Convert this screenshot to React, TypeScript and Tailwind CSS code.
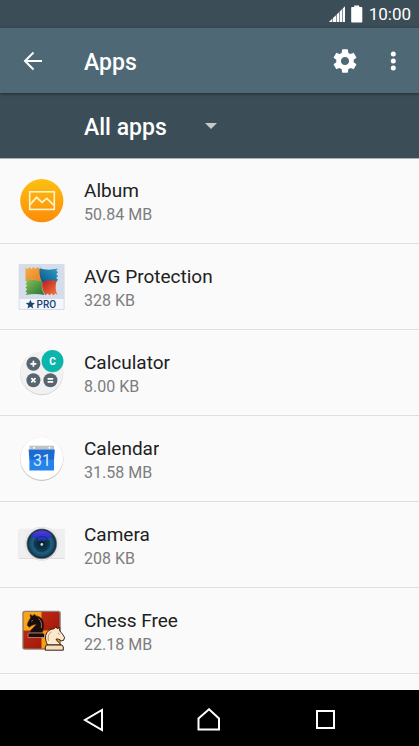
import React from 'react';

interface AppEntry {
  id: string;
  name: string;
  size: string;
  icon: React.ReactNode;
}

const ICON_CLASS = 'w-12 h-12 shrink-0';

function AlbumIcon() {
  return (
    <svg className={ICON_CLASS} viewBox="0 0 48 48" aria-hidden="true">
      <defs>
        <linearGradient id="album-bg" x1="0" y1="0" x2="0" y2="1">
          <stop offset="0" stopColor="#fdc010" />
          <stop offset="1" stopColor="#fb8c08" />
        </linearGradient>
      </defs>
      <circle cx="23.8" cy="23.7" r="21.6" fill="url(#album-bg)" />
      <rect x="11.7" y="14.8" width="24.6" height="17.6" fill="none" stroke="#fff3cf" strokeWidth="1.6" />
      <path d="M12 27.6 18.6 20.3 24 25.4 28.8 21.4 36 28.4" fill="none" stroke="#fff3cf" strokeWidth="1.8" />
    </svg>
  );
}

function AvgIcon() {
  return (
    <svg className={ICON_CLASS} viewBox="0 0 48 48" aria-hidden="true">
      <defs>
        <linearGradient id="avg-orange" x1="0" y1="0" x2="1" y2="1">
          <stop offset="0" stopColor="#f3b04c" />
          <stop offset="1" stopColor="#ea7a1c" />
        </linearGradient>
        <linearGradient id="avg-blue" x1="0" y1="1" x2="1" y2="0">
          <stop offset="0" stopColor="#0a4f86" />
          <stop offset="1" stopColor="#2f9fc2" />
        </linearGradient>
        <linearGradient id="avg-green" x1="0" y1="0" x2="1" y2="1">
          <stop offset="0" stopColor="#8cbf55" />
          <stop offset="1" stopColor="#1f7436" />
        </linearGradient>
        <linearGradient id="avg-red" x1="0" y1="0" x2="1" y2="1">
          <stop offset="0" stopColor="#c0181c" />
          <stop offset="1" stopColor="#f08040" />
        </linearGradient>
      </defs>
      <rect x="0.6" y="1" width="46" height="46" rx="1.5" fill="#d5dcea" />
      <path d="M1.6 36h44v8.500a1.500 1.500 0 0 1-1.500 1.500h-41a1.500 1.500 0 0 1-1.500-1.500z" fill="#f4f8fd" />
      <path d="M7.500 18V4.500l2 1.600 2-2 2 2 2-2 2 2 2-2 2 2 2-2c-.5 3 .5 6 1.500 9 .8 3 .8 5-.5 6-5-2.500-11-3.500-17-1.100z" fill="url(#avg-orange)" />
      <path d="M21.500 5.500c6 1.500 12 1.500 18.500 0l-1.800 2 1.800 1.800-1.800 1.900 1.800 1.800-1.800 1.900 1.800 1.800-1.800 2.300c-5-1.500-9.500-1-13.700 1.500-2.500-5-3.500-10-3-15z" fill="url(#avg-blue)" />
      <path d="M7.500 17.500c6-1.500 12-1 17 1.500-1.500 4.500-.5 8.500 2 13-6-1.500-12.500-1.500-19 0l1.700-2-1.700-1.800 1.700-1.900-1.700-1.800 1.700-1.900-1.700-1.800 1.700-1.700z" fill="url(#avg-green)" />
      <path d="M24.500 19.500c4.500-2.500 9-3 14-1-1.500 4.500-1 9 1 13.500l-2-1.400-2 1.700-2-1.700-2 1.700-2-1.700-2 1.700c-3-4-4-8.500-3-12.800z" fill="url(#avg-red)" />
      <path d="M12.400 36.700l1.300 3 3.300.3-2.500 2.200.8 3.200-2.900-1.700-2.900 1.700.8-3.200-2.500-2.200 3.300-.3z" fill="#1d4274" />
      <text x="18.600" y="45" fontSize="10" fontWeight="500" fill="#1d4274">PRO</text>
    </svg>
  );
}

function CalculatorIcon() {
  return (
    <svg className={ICON_CLASS} viewBox="0 0 48 48" aria-hidden="true">
      <circle cx="23.700" cy="24.600" r="21.600" fill="#cfcfcf" />
      <circle cx="23.700" cy="23.800" r="21.500" fill="#f1f1f1" />
      <g fill="#56656f">
        <circle cx="15.400" cy="14.800" r="7" />
        <circle cx="15.400" cy="31.300" r="7" />
        <circle cx="32.400" cy="31.300" r="7" />
      </g>
      <circle cx="34.500" cy="12.500" r="10.900" fill="#009688" opacity="0.35" />
      <circle cx="34.500" cy="12" r="10.900" fill="#0ab5ac" />
      <g stroke="#fff" strokeWidth="1.700" fill="none">
        <path d="M12.400 14.800h6M15.400 11.800v6" />
        <path d="M13.300 29.200l4.200 4.200M17.500 29.200l-4.200 4.200" />
        <path d="M29.600 29.900h5.600M29.600 32.800h5.600" />
      </g>
      <text x="34.500" y="15.500" fontSize="10" fontWeight="700" textAnchor="middle" fill="#fff">C</text>
    </svg>
  );
}

function CalendarIcon() {
  return (
    <svg className={ICON_CLASS} viewBox="0 0 48 48" aria-hidden="true">
      <circle cx="23.700" cy="24.200" r="21.700" fill="#c4c4c4" />
      <circle cx="23.700" cy="23.400" r="21.600" fill="#e8e8e8" />
      <circle cx="23.700" cy="23.300" r="21.200" fill="#fff" />
      <path d="M11.500 10.700h24.500v4h-24.500z" fill="#bdc3c7" />
      <circle cx="16" cy="12.700" r="1" fill="#fff" />
      <circle cx="31.500" cy="12.700" r="1" fill="#fff" />
      <path d="M10.600 14.400h26.200l-.8 10.600h-24.600z" fill="#1c6bd2" />
      <path d="M11.400 24.500h24.600v11h-24.600z" fill="#2583ec" />
      <text x="23.900" y="30.700" fontSize="16" textAnchor="middle" fill="#dbeafc">31</text>
    </svg>
  );
}

function CameraIcon() {
  return (
    <svg className={ICON_CLASS} viewBox="0 0 48 48" aria-hidden="true">
      <defs>
        <radialGradient id="camera-lens">
          <stop offset="0" stopColor="#3c9bb8" />
          <stop offset="0.3" stopColor="#0b2636" />
          <stop offset="0.65" stopColor="#1d5f80" />
          <stop offset="0.85" stopColor="#174a68" />
          <stop offset="1" stopColor="#14202b" />
        </radialGradient>
        <linearGradient id="camera-glare" x1="0" y1="0" x2="0" y2="1">
          <stop offset="0" stopColor="#5a36d8" />
          <stop offset="0.6" stopColor="#2534c8" />
          <stop offset="1" stopColor="#123a80" />
        </linearGradient>
      </defs>
      <rect x="0.500" y="8.500" width="46.500" height="29.500" rx="1.500" fill="#d9d9d9" />
      <rect x="0.500" y="7.700" width="46.500" height="29.500" rx="1.500" fill="#efeff0" />
      <circle cx="23.800" cy="22.800" r="17" fill="#dedfe1" />
      <circle cx="23.800" cy="22.800" r="16.200" fill="#f6f6f6" />
      <circle cx="23.800" cy="22.800" r="15.400" fill="#7d868e" />
      <circle cx="23.800" cy="22.800" r="14.500" fill="url(#camera-lens)" />
      <path d="M13 14.800a13.500 13.500 0 0 1 21.600 0L23.800 21.500z" fill="url(#camera-glare)" />
      <circle cx="23.800" cy="22.800" r="7.500" fill="none" stroke="#081a2b" strokeOpacity="0.4" strokeWidth="1" />
      <circle cx="23.800" cy="22.800" r="3.200" fill="#0a2030" />
      <circle cx="23.800" cy="23.500" r="1.400" fill="#a6e4ee" />
    </svg>
  );
}

function ChessIcon() {
  return (
    <svg className={ICON_CLASS} viewBox="0 0 48 48" aria-hidden="true">
      <defs>
        <linearGradient id="chess-red" x1="0" y1="0" x2="1" y2="1">
          <stop offset="0" stopColor="#c8321a" />
          <stop offset="1" stopColor="#961004" />
        </linearGradient>
      </defs>
      <rect x="4.300" y="3.700" width="38.500" height="39" rx="2.500" fill="#8f8179" />
      <rect x="5.500" y="5" width="36" height="36.500" rx="1.500" fill="url(#chess-red)" />
      <path d="M7 5h16.500v18.500h-18v-17a1.500 1.500 0 0 1 1.500-1.500z" fill="#f7a51b" />
      <path d="M23.500 23.500h18v16.500a1.500 1.500 0 0 1-1.500 1.500h-16.500z" fill="#f4a010" />
      {/* black knight */}
      <path d="M12 25.500c.5-3.500 4.500-5 6.500-8.500-2 .8-4 .8-5.500 2l-1.800 1.200-1.900-2c.2-3 2-4.500 3.200-7.200l-.4-3.500 2.700 1.400 1.600-1.700 1.700 1.700c5.500.5 8.500 5.500 7.500 11.500l-1.100 5.100z" fill="#1b0d0a" stroke="#4b1c10" strokeWidth="0.600" />
      <path d="M11 26h14.500l1 1.600v2.900h-16.500v-2.900z" fill="#1b0d0a" stroke="#e2bd9e" strokeWidth="0.600" />
      <path d="M13.300 14.300l1.600-.9M20.500 11.500c2.500 2 3.500 5 2.800 9.500" stroke="#c7a489" strokeWidth="0.700" fill="none" />
      {/* white knight */}
      <path d="M29.500 38c-1.500-3.500-2.500-6-1.800-9.500.8-3.800 4-6.500 8.300-6.800l2-1.900 1.200 1.900 2.600-1.200-.2 3.200c2.200 2.600 3.800 4.300 5 7l-1.200 2.800-2.200.3c-1.700-1.600-3.400-2-5.200-1.700.6 2.500 4 3.300 4.500 5.900z" fill="#fbe9cd" stroke="#3b1b0c" strokeWidth="1" />
      <path d="M28.500 38h15.500l1.300 2v3.200h-18v-3.200z" fill="#f5dfc0" stroke="#3b1b0c" strokeWidth="1" />
      <path d="M39.800 26.300l1.700.9M33.500 24.800c-3 2-4 5-3 9" stroke="#a8784e" strokeWidth="0.800" fill="none" />
    </svg>
  );
}

const APPS: AppEntry[] = [
  { id: 'album', name: 'Album', size: '50.84 MB', icon: <AlbumIcon /> },
  { id: 'avg', name: 'AVG Protection', size: '328 KB', icon: <AvgIcon /> },
  { id: 'calculator', name: 'Calculator', size: '8.00 KB', icon: <CalculatorIcon /> },
  { id: 'calendar', name: 'Calendar', size: '31.58 MB', icon: <CalendarIcon /> },
  { id: 'camera', name: 'Camera', size: '208 KB', icon: <CameraIcon /> },
  { id: 'chess', name: 'Chess Free', size: '22.18 MB', icon: <ChessIcon /> },
];

function StatusBar() {
  return (
    <div className="h-7 flex items-center justify-end gap-1.5 pr-2 bg-[#3b4d57] text-white">
      <svg className="w-4 h-4" viewBox="0 0 16 16" aria-label="Signal strength">
        <path d="M0 16L3 13V16zM4 12L7 9.500V16H4zM8 8.500L10 6.500V16H8zM11 5.500L13 3.500V16H11zM14 2.500L16 .5V16H14z" fill="#fff" />
        <path d="M0 16L16 0V16z" fill="#fff" opacity="0.4" />
      </svg>
      <svg className="w-3 h-[18px]" viewBox="0 0 12 18" aria-label="Battery full">
        <path d="M3.200 .5h5v1.500h2.300a.8.800 0 0 1 .8.800v14a.7.700 0 0 1-.7.700H.9a.7.700 0 0 1-.7-.7V2.800a.8.800 0 0 1 .8-.8h2.200z" fill="#fff" />
      </svg>
      <span className="text-[17px] leading-7">10:00</span>
    </div>
  );
}

function Toolbar() {
  return (
    <header className="relative z-10 h-[65px] flex items-center pl-5 pr-3 bg-[#4e6875] text-white shadow-[0_1px_3px_rgba(0,0,0,0.45)]">
      <button type="button" aria-label="Back" className="w-6 h-6">
        <svg className="w-6 h-6" viewBox="0 0 24 24" fill="none" stroke="currentColor" strokeWidth="2">
          <path d="M22 12H5M13.500 3.500L5 12L13.500 20.500" />
        </svg>
      </button>
      <h1 className="flex-1 pl-10 pt-1 text-[23px] leading-8 font-medium">Apps</h1>
      <button type="button" aria-label="Settings" className="w-7 h-7 mr-5">
        <svg className="w-7 h-7" viewBox="0 0 24 24" fill="currentColor">
          <path d="M19.430 12.980c.04-.32.070-.64.070-.98s-.03-.66-.07-.98l2.110-1.650c.19-.15.240-.42.120-.64l-2-3.460c-.12-.22-.39-.3-.61-.22l-2.490 1c-.52-.4-1.080-.73-1.690-.98l-.38-2.650C14.460 2.180 14.250 2 14 2h-4c-.25 0-.46.180-.49.420l-.38 2.650c-.61.250-1.170.590-1.690.98l-2.490-1c-.23-.09-.49 0-.61.220l-2 3.460c-.13.220-.07.490.120.640l2.110 1.650c-.04.320-.07.650-.07.980s.03.660.070.980l-2.110 1.650c-.19.150-.24.420-.12.640l2 3.460c.12.220.390.300.610.220l2.490-1c.52.400 1.080.730 1.690.980l.38 2.650c.03.240.240.420.490.420h4c.25 0 .46-.18.490-.42l.38-2.650c.61-.25 1.170-.59 1.690-.98l2.490 1c.23.090.490 0 .61-.22l2-3.460c.12-.22.070-.49-.12-.64l-2.110-1.650zM12 15.500c-1.930 0-3.500-1.570-3.500-3.500s1.570-3.500 3.500-3.500 3.500 1.570 3.500 3.500-1.570 3.500-3.500 3.500z" />
        </svg>
      </button>
      <button type="button" aria-label="More options" className="w-7 h-7">
        <svg className="w-7 h-7" viewBox="0 0 28 28" fill="currentColor">
          <circle cx="14.300" cy="7" r="2.500" />
          <circle cx="14.300" cy="14" r="2.500" />
          <circle cx="14.300" cy="21" r="2.500" />
        </svg>
      </button>
    </header>
  );
}

function FilterBar() {
  return (
    <div className="h-[65px] flex items-center pl-[84px] bg-[#3b4d57] text-white shadow-[0_1px_0_#a9b4b9]">
      <div className="grid items-center w-[133px]">
        <select
          aria-label="Filter apps"
          defaultValue="all"
          className="col-start-1 row-start-1 w-full pt-1 appearance-none bg-transparent text-[23px] leading-8 font-medium outline-none"
        >
          <option value="all">All apps</option>
        </select>
        <svg className="col-start-1 row-start-1 justify-self-end w-3 h-1.5 pointer-events-none" viewBox="0 0 12 6">
          <path d="M0 0h12L6 6z" fill="#c4cace" />
        </svg>
      </div>
    </div>
  );
}

function AppRow({ app }: { app: AppEntry }) {
  return (
    <li className="h-[86px] border-b border-[#dedede]">
      <button type="button" className="w-full h-full flex items-center gap-[18px] pl-[18px] pr-4 text-left">
        {app.icon}
        <div className="min-w-0 pt-1">
          <div className="text-[19px] leading-6 text-[#212121] truncate">{app.name}</div>
          <div className="text-base leading-6 text-[#7d7d7d] truncate">{app.size}</div>
        </div>
      </button>
    </li>
  );
}

function NavBar() {
  return (
    <nav className="h-14 grid grid-cols-3 items-center justify-items-center px-9 pt-1 bg-black text-white">
      <button type="button" aria-label="Back" className="w-6 h-6">
        <svg className="w-6 h-6" viewBox="0 0 24 24" fill="none" stroke="currentColor" strokeWidth="2">
          <path d="M20 2v20L3 12z" />
        </svg>
      </button>
      <button type="button" aria-label="Home" className="w-6 h-6">
        <svg className="w-6 h-6" viewBox="0 0 24 24" fill="none" stroke="currentColor" strokeWidth="2">
          <path d="M12 1.300L22 10.500V21.500H1.500V10.500z" />
        </svg>
      </button>
      <button type="button" aria-label="Recent apps" className="w-6 h-6">
        <svg className="w-6 h-6" viewBox="0 0 24 24" fill="none" stroke="currentColor" strokeWidth="2">
          <rect x="4" y="3" width="17" height="17" />
        </svg>
      </button>
    </nav>
  );
}

export default function App() {
  return (
    <div className="min-h-screen flex flex-col bg-[#fafafa] font-['Roboto',sans-serif]">
      <StatusBar />
      <Toolbar />
      <FilterBar />
      <ul className="flex-1">
        {APPS.map((app) => (
          <AppRow key={app.id} app={app} />
        ))}
      </ul>
      <NavBar />
    </div>
  );
}
